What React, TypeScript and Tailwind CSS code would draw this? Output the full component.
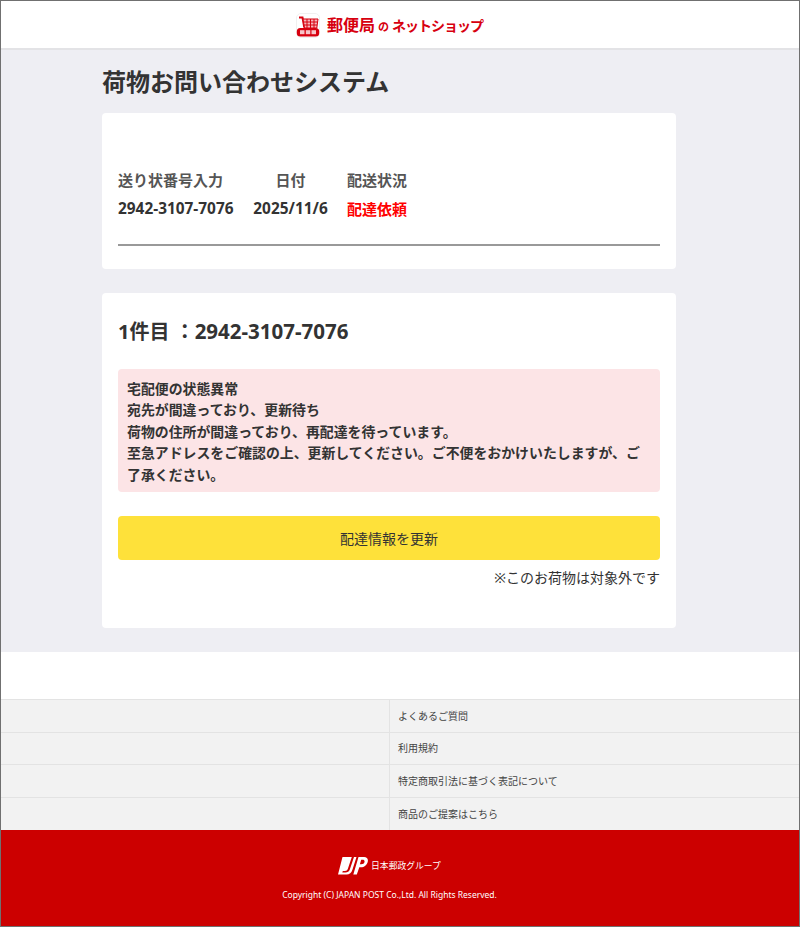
const font = "font-['Noto_Sans','Noto_Sans_CJK_JP',sans-serif]";

function CartLogo() {
  return (
    <svg width="24" height="25" viewBox="0 0 24 25" aria-hidden="true">
      <rect x="0.5" y="0.5" width="23" height="24" rx="4.5" fill="#fff" stroke="#f0f0f0" />
      <path d="M3 4.500h3.500l1.800 10" fill="none" stroke="#d7000f" strokeWidth="2" />
      <path d="M7 6h15l-1.200 9H8.500z" fill="#f5b5ba" />
      <path d="M7 6h15l-1.200 9H8.500zM11 6v9M14.500 6v9M18 6v9M7.500 9h14M8 12h13" fill="none" stroke="#d7000f" strokeWidth="1" />
      <rect x="0.800" y="15" width="22.400" height="8.500" rx="3.500" fill="#d7000f" />
      <rect x="4" y="17.200" width="4.500" height="4" fill="#f7c4c8" />
      <rect x="9.800" y="17.200" width="4.500" height="4" fill="#f7c4c8" />
      <rect x="15.500" y="17.200" width="4.500" height="4" fill="#f7c4c8" />
    </svg>
  );
}

function JpMark() {
  return (
    <svg width="30" height="18" viewBox="0 0 30 18" aria-hidden="true">
      <path d="M4.500 0H18.500L14.500 12.500C13.500 16 11.500 17.500 8.500 17.500H0z" fill="#fff" />
      <path d="M13.800 0H16L11.800 12.500C11 14.800 9.500 15.500 7.500 15.500H4.300L4.800 14H7C8.500 14 9.300 13.300 9.800 12z" fill="#cc0000" />
      <path fillRule="evenodd" d="M20.500 0H26C29 0 30.500 2 29.700 5C29 8 26 10.300 23 10.300H21.300L18.800 17.500H15.300zM23.200 2.800L21.900 7.300H23.200C25 7.300 26.200 6.300 26.500 5C26.800 3.600 26 2.800 24.800 2.800z" fill="#fff" />
    </svg>
  );
}

const links = ["よくあるご質問", "利用規約", "特定商取引法に基づく表記について", "商品のご提案はこちら"];

export default function App() {
  return (
    <div className={`${font} h-[927px] overflow-hidden border border-[#707070] bg-white text-[#333]`}>
      <header className="flex h-[49px] items-center justify-center gap-[7px] border-b-2 border-[#e3e3e6] pr-[21px] pt-[1px]">
        <CartLogo />
        <div className="flex items-baseline font-bold text-[#d7000f]">
          <span className="text-[16px] leading-none">郵便局</span>
          <span className="mx-[3px] text-[11px] leading-none">の</span>
          <span className="text-[14px] leading-none tracking-[-1px]">ネットショップ</span>
        </div>
      </header>

      <main className="h-[602px] bg-[#eeeef3] pl-[101px] pr-[123px]">
        <h1 className="pt-[15px] text-[24px] leading-[34px] font-bold">荷物お問い合わせシステム</h1>

        <section className="mt-[14px] h-[156px] rounded-[4px] bg-white px-[16px] pt-[55px]">
          <div className="flex gap-[19px] text-[15px] font-bold">
            <div className="w-[116px]">
              <div className="leading-[24px] text-[#555]">送り状番号入力</div>
              <div className="mt-[5px] text-[15.4px] leading-[24px] whitespace-nowrap">2942-3107-7076</div>
            </div>
            <div className="w-[75px] text-center">
              <div className="leading-[24px] text-[#555]">日付</div>
              <div className="mt-[5px] text-[15.4px] leading-[24px] whitespace-nowrap">2025/11/6</div>
            </div>
            <div className="w-[60px] text-center">
              <div className="leading-[24px] text-[#555]">配送状況</div>
              <div className="mt-[5px] leading-[24px] text-[#ff0000]">配達依頼</div>
            </div>
          </div>
          <div className="mt-[23px] h-[1.500px] bg-[#999]" />
        </section>

        <section className="mt-[24px] h-[335px] rounded-[4px] bg-white px-[16px] pt-[23px]">
          <h2 className="text-[20px] leading-[30px] font-bold">
            1件目 ：<span className="text-[20.500px]">2942-3107-7076</span>
          </h2>
          <div className="mt-[22px] rounded-[4px] bg-[#fce4e6] px-[9px] pt-[9px] pb-[7px] text-[13.900px] leading-[21.400px] font-bold">
            <div>宅配便の状態異常</div>
            <div>宛先が間違っており、更新待ち</div>
            <div>荷物の住所が間違っており、再配達を待っています。</div>
            <div>至急アドレスをご確認の上、更新してください。ご不便をおかけいたしますが、ご了承ください。</div>
          </div>
          <button className="mt-[24px] h-[44px] w-full rounded-[4px] bg-[#fee13a] text-[14px] text-[#333]">配達情報を更新</button>
          <p className="mt-[7px] text-right text-[14px] leading-[21px]">※このお荷物は対象外です</p>
        </section>
      </main>

      <div className="h-[47px] bg-white" />

      <nav className="border-t border-[#e3e3e3] bg-[#f2f2f2]">
        {links.map((l) => (
          <div key={l} className="flex h-[32.500px] border-b border-[#e3e3e3] last:border-b-0">
            <div className="w-[389px] border-r border-[#e3e3e3]" />
            <div className="flex items-center pl-[8px] pt-[1px] text-[10px] text-[#444]">{l}</div>
          </div>
        ))}
      </nav>

      <footer className="h-[97px] bg-[#cc0000] pt-[27px] pr-[21px] text-white">
        <div className="flex items-center justify-center gap-[3px]">
          <JpMark />
          <span className="text-[8.800px] leading-none">日本郵政グループ</span>
        </div>
        <p className="mt-[13px] text-center text-[8.500px] leading-[13px]">Copyright (C) JAPAN POST Co.,Ltd. All Rights Reserved.</p>
      </footer>
    </div>
  );
}
